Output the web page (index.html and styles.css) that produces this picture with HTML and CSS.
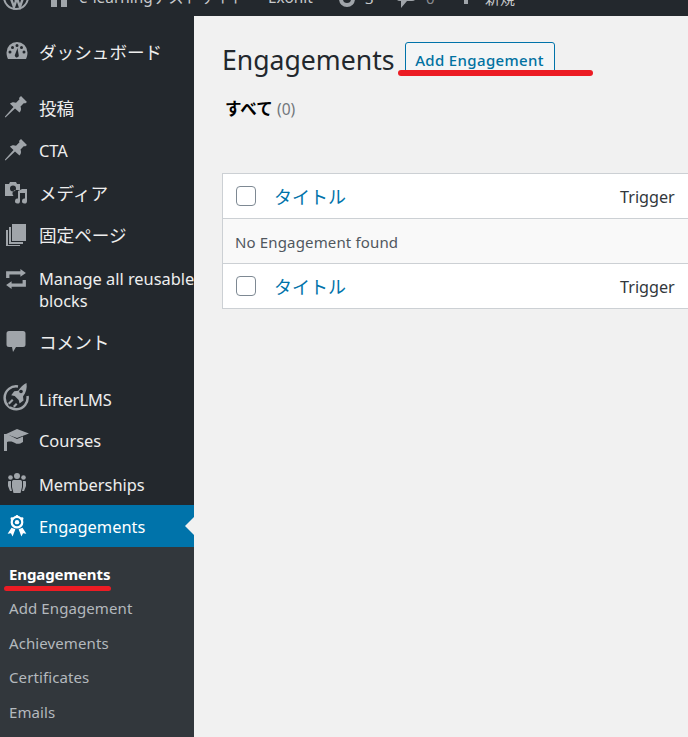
FILE: index.html
```html
<!DOCTYPE html>
<html lang="ja">
<head>
<meta charset="utf-8">
<title>Engagements</title>
<link rel="stylesheet" href="styles.css">
</head>
<body>
<header class="adminbar">
  <svg class="bar-wp" viewBox="0 0 26 26"><circle cx="13" cy="13" r="12" fill="none" stroke="#a0a5aa" stroke-width="2"/><path d="M6 9l5 14 2-6-2-6M12 9l5 14 3-9c.6-2-.5-4-1-5" fill="none" stroke="#a0a5aa" stroke-width="2.4"/></svg>
  <svg class="bar-home" viewBox="0 0 16 16"><path d="M0 0h16v16H10V9H6v7H0z" fill="#a0a5aa"/></svg>
  <span class="bar-site">e-learningテストサイト</span>
  <span class="bar-exonit">Exonit</span>
  <svg class="bar-update" viewBox="0 0 20 20"><path d="M10 1a8 8 0 1 0 8 8h-4a4 4 0 1 1-4-4z" fill="#a0a5aa"/></svg>
  <span class="bar-num">3</span>
  <svg class="bar-comment" viewBox="0 0 20 20"><path d="M0 0h20v8a4 4 0 0 1-4 4h-5l-6 7v-7H4a4 4 0 0 1-4-4z" fill="#a0a5aa"/></svg>
  <span class="bar-zero">0</span>
  <svg class="bar-plus" viewBox="0 0 12 12"><path d="M4 0h4v4h4v4H8v4H4V8H0V4h4z" fill="#a0a5aa"/></svg>
  <span class="bar-new">新規</span>
</header>
<div class="shell">
  <nav class="sidebar">
    <ul class="menu">
      <li class="item item-jp item-dash"><svg class="ico" viewBox="0 0 22 18"><path d="M11 0A10.500 10.500 0 0 0 .5 10.500c0 2.800.8 5.200 1.500 6.500h18c.7-1.300 1.500-3.700 1.500-6.500A10.500 10.500 0 0 0 11 0zM4 11.500a1.500 1.500 0 1 1 0-3 1.500 1.500 0 0 1 0 3zm2.500-4.500a1.500 1.500 0 1 1 0-3 1.500 1.500 0 0 1 0 3zM11 5a1.500 1.500 0 1 1 0-3 1.500 1.500 0 0 1 0 3zm1.800 8.500a2 2 0 1 1-3.600-1.200L11.500 6zM15.500 7a1.500 1.500 0 1 1 0-3 1.500 1.500 0 0 1 0 3zm2.500 4.500a1.500 1.500 0 1 1 0-3 1.500 1.500 0 0 1 0 3z" fill="#a0a5aa" fill-rule="evenodd"/></svg><span>ダッシュボード</span></li>
      <li class="item item-jp item-post"><svg class="ico" viewBox="0 0 22 22"><path d="M16 0l6 6-2 1.500-1-.5-3.500 3.500c1 2.500.5 4.500-1 6L10 12.500 1 21l-1 .5v-1L8.500 11 5 7.800c1.500-1.500 3.500-2 6-1L14.500 3.300 14 2z" fill="#a0a5aa"/></svg><span>投稿</span></li>
      <li class="item item-cta"><svg class="ico" viewBox="0 0 22 22"><path d="M16 0l6 6-2 1.500-1-.5-3.500 3.500c1 2.500.5 4.500-1 6L10 12.500 1 21l-1 .5v-1L8.500 11 5 7.800c1.500-1.500 3.500-2 6-1L14.500 3.300 14 2z" fill="#a0a5aa"/></svg><span>CTA</span></li>
      <li class="item item-jp item-media"><svg class="ico" viewBox="0 0 23 22"><path d="M5 0h6l1 2h3v6h-3.500a3.500 3.500 0 0 0-3 6H0V2h4zm3 3.500a3 3 0 1 0 0 6 3 3 0 0 0 0-6z" fill="#a0a5aa" fill-rule="evenodd"/><path d="M22 7v12a2.500 2.500 0 1 1-2-2.400V11h-5v8a2.500 2.500 0 1 1-2-2.400V9l4-2z" fill="#a0a5aa"/></svg><span>メディア</span></li>
      <li class="item item-jp item-page"><svg class="ico" viewBox="0 0 22 22"><path d="M7 0h14v17H7z" fill="#a0a5aa"/><path d="M4 3h2v15h12v2H4z" fill="#a0a5aa"/><path d="M1 6h2v15h12v1H1z" fill="#a0a5aa"/></svg><span>固定ページ</span></li>
      <li class="item item-reuse"><svg class="ico" viewBox="0 0 20 20"><path d="M14 1l5 3.500L14 8V6H4v3H1V3h13zM6 19l-5-3.500L6 12v2h10v-3h3v6H6z" fill="#a0a5aa"/></svg><span>Manage all reusable<br>blocks</span></li>
      <li class="item item-jp item-comment"><svg class="ico" viewBox="0 0 20 22"><path d="M3 0h14a2.500 2.500 0 0 1 2.500 2.500v11A2.500 2.500 0 0 1 17 16h-7l-3 5-1-5H3a2.500 2.500 0 0 1-2.500-2.500v-11A2.500 2.500 0 0 1 3 0z" fill="#a0a5aa"/></svg><span>コメント</span></li>
      <li class="item item-lifter"><svg class="ico ico-lg" viewBox="0 0 26 28"><path d="M15 3.500A11.500 11.500 0 1 0 24.500 13" fill="none" stroke="#a0a5aa" stroke-width="2.500"/><path d="M23.500 0c.8 5-.5 10-3.500 13.500l.5 4-4 3-.8-3.500-4-4-3.500-.7 3-4 4-.5C17.500 4 20.500 1.500 23.500 0z" fill="#a0a5aa"/><path d="M5 22l5-6 2 2-5 6zM10 23l3-4 1.500 1.500-3 4z" fill="#23282d"/><path d="M5 20l4-4 1.500 1.500-4 4zM10 23l3-3 1.500 1.500-3 3z" fill="#a0a5aa"/><circle cx="18" cy="8.500" r="1.800" fill="#23282d"/></svg><span>LifterLMS</span></li>
      <li class="item item-courses"><svg class="ico ico-lg" viewBox="0 0 26 22"><path d="M14 0l12 4.500L14 9 7 6.500 4 7v-.500L2 5.500z" fill="#a0a5aa"/><path d="M1 5h3l10 5 6-2.500V13c-3 2-6 2.500-8 1-2-1-4-2-8-1v9H1z" fill="#a0a5aa"/></svg><span>Courses</span></li>
      <li class="item item-members"><svg class="ico" viewBox="0 0 20 20"><circle cx="10" cy="3" r="3" fill="#a0a5aa"/><circle cx="3.500" cy="4.500" r="2.300" fill="#a0a5aa"/><circle cx="16.500" cy="4.500" r="2.300" fill="#a0a5aa"/><path d="M6.500 7h7c1 0 1.500 1 1.500 2v5l-1.500 6h-7L5 14V9c0-1 .5-2 1.500-2zM1.500 8H4v6l1 4H3l-2-5V9zM16 8h2.500l.5 1v4l-2 5h-2l1-4z" fill="#a0a5aa"/></svg><span>Memberships</span></li>
      <li class="item item-active"><svg class="ico" viewBox="0 0 20 20"><circle cx="10" cy="6.500" r="4.800" fill="none" stroke="#fff" stroke-width="2"/><circle cx="10" cy="6.500" r="2" fill="#fff"/><circle cx="10" cy="1.300" r="1.300" fill="#fff"/><circle cx="5.400" cy="3.300" r="1.300" fill="#fff"/><circle cx="14.600" cy="3.300" r="1.300" fill="#fff"/><path d="M5 11.500L1.500 17l3-.5 1.500 3L8.500 13zM15 11.500l3.500 5.500-3-.5-1.500 3-2.500-6.500z" fill="#fff"/></svg><span>Engagements</span><i class="pointer"></i></li>
    </ul>
    <ul class="submenu">
      <li class="sub sub-current">Engagements</li>
      <li class="sub">Add Engagement</li>
      <li class="sub">Achievements</li>
      <li class="sub">Certificates</li>
      <li class="sub">Emails</li>
    </ul>
    <div class="mark mark-side"></div>
  </nav>
  <main class="content">
    <div class="head">
      <h1 class="title">Engagements</h1>
      <a class="addbtn">Add Engagement</a>
      <div class="mark mark-top"></div>
    </div>
    <div class="views"><b>すべて</b> <span class="count">(0)</span></div>
    <div class="table">
      <div class="row row-head"><span class="check"></span><span class="col-title">タイトル</span><span class="col-trigger">Trigger</span></div>
      <div class="row row-empty"><span class="empty-text">No Engagement found</span></div>
      <div class="row row-foot"><span class="check"></span><span class="col-title">タイトル</span><span class="col-trigger">Trigger</span></div>
    </div>
  </main>
</div>
</body>
</html>
```
FILE: styles.css
```css
* { box-sizing: border-box; }
html, body { margin: 0; padding: 0; height: 737px; overflow: hidden; }
body { background: #f1f1f1; font-family: "Noto Sans", "Noto Sans CJK JP", sans-serif; color: #444; position: relative; }
ul { list-style: none; margin: 0; padding: 0; }

.adminbar { height: 16px; background: #23282d; position: relative; overflow: hidden; color: #c8cacc; font-size: 15px; line-height: 16px; }
.adminbar > * { position: absolute; }
.bar-wp { left: 3px; top: -16px; width: 26px; height: 26px; }
.bar-home { left: 51px; top: -9px; width: 16px; height: 16px; }
.bar-site { left: 79px; top: -10px; white-space: nowrap; font-size: 15.4px; }
.bar-exonit { left: 268px; top: -10px; font-size: 15.4px; }
.bar-update { left: 337px; top: -10px; width: 20px; height: 20px; }
.bar-num { left: 365px; top: -10px; }
.bar-comment { left: 396px; top: -11px; width: 20px; height: 20px; }
.bar-zero { left: 426px; top: -10px; color: #8a8d90; }
.bar-plus { left: 460px; top: -8px; width: 12px; height: 12px; }
.bar-new { left: 485px; top: -10px; white-space: nowrap; }

.shell { display: flex; height: 721px; }
.sidebar { width: 194px; flex: none; background: #23282d; position: relative; overflow: hidden; }
.menu { padding-top: 15px; }
.item { display: flex; align-items: flex-start; padding-left: 39px; position: relative; color: #eee; font-size: 16.4px; line-height: 22px; }
.item-jp { font-size: 17.6px; }
.item span { display: block; white-space: nowrap; }
.ico { position: absolute; left: 5px; width: 22px; height: 22px; }
.ico-lg { left: 3px; width: 26px; height: 26px; }
.item-dash { padding-top: 10px; height: 42px; }
.item-dash .ico { top: 11px; left: 6px; height: 18px; }
.item-post { margin-top: 14px; height: 43px; padding-top: 10px; }
.item-post .ico { top: 9px; }
.item-cta { height: 43px; padding-top: 10px; }
.item-cta .ico { top: 9px; }
.item-media { height: 42px; padding-top: 9px; }
.item-media .ico { top: 9px; width: 23px; }
.item-page { height: 43px; padding-top: 9px; }
.item-page .ico { top: 9px; left: 5px; }
.item-reuse { height: 63px; padding-top: 10px; }
.item-reuse .ico { top: 10px; }
.item-comment { height: 42px; padding-top: 10px; }
.item-comment .ico { top: 10px; left: 6px; width: 20px; }
.item-lifter { margin-top: 15px; height: 42px; padding-top: 11px; }
.item-lifter .ico { top: 5px; height: 28px; }
.item-courses { height: 43px; padding-top: 10px; }
.item-courses .ico { top: 9px; height: 22px; }
.item-members { height: 42px; padding-top: 11px; }
.item-members .ico { top: 10px; left: 7px; width: 20px; height: 20px; }
.item-active { height: 42px; padding-top: 11px; background: #0073aa; color: #fff; }
.item-active .ico { top: 10px; left: 6px; }
.pointer { position: absolute; right: 0; top: 12px; width: 0; height: 0; border: 9px solid transparent; border-right-color: #f1f1f1; border-left-width: 0; }

.submenu { background: #32373c; padding: 17px 0 30px; }
.sub { padding-left: 9px; font-size: 15px; line-height: 20px; height: 34.400px; color: #b4b9be; letter-spacing: .1px; }
.sub-current { color: #fff; font-weight: 700; letter-spacing: -.1px; }

.mark { position: absolute; height: 6px; border-radius: 3px; background: #ec1c24; }
.mark-side { left: 4px; top: 570px; width: 107px; height: 5px; }

.content { flex: 1; min-width: 0; padding: 26px 0 0 28px; position: relative; overflow: hidden; }
.head { display: flex; align-items: flex-start; height: 37px; position: relative; }
.title { margin: 0; font-size: 26.6px; font-weight: 400; line-height: 36px; color: #23282d; }
.addbtn { margin-left: 10px; height: 34px; width: 150px; border: 1px solid #0073aa; border-radius: 3px; background: #f3f5f6; color: #0071a1; font-size: 15px; font-weight: 500; line-height: 34px; text-align: center; letter-spacing: .35px; }
.mark-top { left: 176px; top: 28px; width: 195px; }
.views { margin-top: 19px; padding-left: 3px; font-size: 16.5px; line-height: 22px; color: #000; }
.views b { font-weight: 700; }
.count { color: #72777c; font-size: 15.6px; }
.table { margin-top: 53px; width: 480px; border: 1px solid #ccd0d4; border-right: 0; background: #fff; }
.row { height: 45px; display: flex; align-items: center; }
.row-head { border-bottom: 1px solid #ccd0d4; height: 45px; }
.row-foot { height: 44px; }
.row-empty { background: #f9f9f9; border-bottom: 1px solid #ccd0d4; padding-left: 12px; font-size: 15px; color: #50575e; height: 45px; letter-spacing: .15px; }
.empty-text { padding-top: 2px; }
.check { width: 20px; height: 20px; margin-left: 13px; border: 1px solid #7e8993; border-radius: 4px; background: #fff; flex: none; }
.col-title { margin-left: 18px; font-size: 18px; color: #0073aa; width: 346px; flex: none; }
.col-trigger { font-size: 16.2px; color: #32373c; padding-top: 2px; }
```
